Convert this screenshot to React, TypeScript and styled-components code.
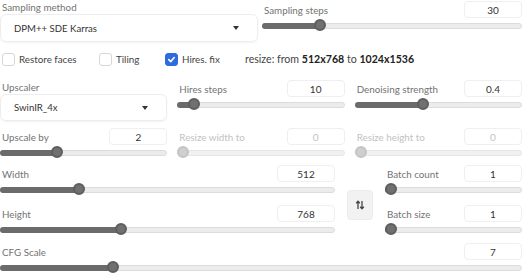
import React from "react";
import styled, { createGlobalStyle } from "styled-components";

const GlobalStyle = createGlobalStyle`
  body {
    margin: 0;
    background: #ffffff;
    font-family: Lato, "Noto Sans", sans-serif;
    font-size: 9.8px;
  }
`;

const Page = styled.div`
  width: 522px;
  display: flex;
  flex-direction: column;
`;

const TopRow = styled.div`
  display: grid;
  grid-template-columns: 258px 1fr;
  gap: 4px;
`;

const Field = styled.div`
  display: flex;
  flex-direction: column;
`;

const Label = styled.div<{ disabled?: boolean }>`
  height: 14px;
  line-height: 14px;
  padding-left: 2px;
  font-size: 9.8px;
  color: ${({ disabled }) => (disabled ? "#c2c2c2" : "#737373")};
  white-space: nowrap;
`;

const SelectBox = styled.div<{ h: number }>`
  height: ${({ h }) => h}px;
  box-sizing: border-box;
  border: 1px solid #ededed;
  border-radius: 6px;
  box-shadow: 0 1px 2px rgba(0, 0, 0, 0.05);
  display: flex;
  align-items: center;
  justify-content: space-between;
  padding: 0 18px 0 13px;
  color: #333;
  font-size: 9.6px;
`;

const Caret = styled.span`
  width: 0;
  height: 0;
  border-left: 3px solid transparent;
  border-right: 3px solid transparent;
  border-top: 4px solid #333;
`;

const SliderWrap = styled.div<{ top?: number }>`
  display: flex;
  flex-direction: column;
  padding-top: ${({ top }) => top || 0}px;
`;

const SliderHead = styled.div`
  height: 17px;
  display: flex;
  align-items: center;
  justify-content: space-between;
`;

const NumBox = styled.div<{ disabled?: boolean }>`
  width: 58px;
  height: 17px;
  box-sizing: border-box;
  border: 1px solid #efefef;
  border-radius: 4px;
  display: flex;
  align-items: center;
  justify-content: center;
  font-size: 10px;
  color: ${({ disabled }) => (disabled ? "#c2c2c2" : "#333")};
`;

const TrackArea = styled.div`
  position: relative;
  height: 14px;
`;

const Track = styled.div<{ disabled?: boolean }>`
  position: absolute;
  left: 0;
  right: 0;
  top: 5px;
  height: 4px;
  border: 1px solid #dcdcdc;
  background: #ececec;
  border-radius: 3px;
  opacity: ${({ disabled }) => (disabled ? 0.7 : 1)};
`;

const Fill = styled.div`
  position: absolute;
  left: 0;
  top: 5px;
  height: 6px;
  background: #6b6b6b;
  border-radius: 3px;
`;

const Thumb = styled.div<{ disabled?: boolean }>`
  position: absolute;
  top: 1px;
  width: 12px;
  height: 12px;
  margin-left: -6px;
  box-sizing: border-box;
  border-radius: 50%;
  background: ${({ disabled }) => (disabled ? "#cfcfcf" : "#707070")};
  border: 2px solid ${({ disabled }) => (disabled ? "#c4c4c4" : "#5e5e5e")};
`;

const CheckRow = styled.div`
  margin-top: 8px;
  height: 18px;
  padding-left: 2px;
  display: flex;
  align-items: center;
`;

const CheckItem = styled.label<{ w: number }>`
  display: flex;
  align-items: center;
  width: ${({ w }) => w}px;
  color: #444;
  font-size: 9.8px;
`;

const Box = styled.span<{ checked?: boolean }>`
  width: 13px;
  height: 13px;
  box-sizing: border-box;
  border-radius: 3px;
  margin-right: 4px;
  display: flex;
  align-items: center;
  justify-content: center;
  border: 1px solid ${({ checked }) => (checked ? "#2f6be0" : "#d6d6d6")};
  background: ${({ checked }) => (checked ? "#2f6be0" : "#fff")};
`;

const ResizeInfo = styled.div`
  margin-left: 2px;
  color: #444;
  font-size: 10.6px;
  b {
    color: #222;
    font-weight: 700;
  }
`;

const ThreeCol = styled.div<{ mt: number }>`
  margin-top: ${({ mt }) => mt}px;
  display: grid;
  grid-template-columns: 1fr 1fr 1fr;
  gap: 10px;
`;

const SizeRow = styled.div`
  margin-top: 6px;
  display: grid;
  grid-template-columns: 335px 26px 1fr;
  column-gap: 12px;
`;

const Stack = styled.div`
  display: flex;
  flex-direction: column;
  gap: 9px;
`;

const SwapButton = styled.div`
  margin-top: 25px;
  width: 26px;
  height: 30px;
  box-sizing: border-box;
  border: 1px solid #ececec;
  background: #f2f2f3;
  border-radius: 4px;
  display: flex;
  align-items: center;
  justify-content: center;
`;

const CfgRow = styled.div`
  margin-top: 7px;
`;

type SliderProps = {
  label: string;
  value: string;
  pct: number;
  disabled?: boolean;
  top?: number;
};

const Slider = ({ label, value, pct, disabled, top }: SliderProps) => (
  <SliderWrap top={top}>
    <SliderHead>
      <Label disabled={disabled}>{label}</Label>
      <NumBox disabled={disabled}>{value}</NumBox>
    </SliderHead>
    <TrackArea>
      <Track disabled={disabled} />
      {!disabled && <Fill style={{ width: `calc(${pct / 100} * (100% - 12px) + 6px)` }} />}
      <Thumb
        disabled={disabled}
        style={{ left: `calc(${pct / 100} * (100% - 12px) + 6px)` }}
      />
    </TrackArea>
  </SliderWrap>
);

const Check = () => (
  <svg width="9" height="9" viewBox="0 0 10 10">
    <path d="M2 5.2 L4.2 7.3 L8 2.8" fill="none" stroke="#fff" strokeWidth="1.8" strokeLinecap="round" strokeLinejoin="round" />
  </svg>
);

const SwapIcon = () => (
  <svg width="10" height="10" viewBox="0 0 10 10">
    <path d="M3 9 V1.5 M1.2 3.3 L3 1.3 L4.8 3.3" fill="none" stroke="#444" strokeWidth="1.3" />
    <path d="M7 1 V8.5 M5.2 6.7 L7 8.7 L8.8 6.7" fill="none" stroke="#444" strokeWidth="1.3" />
  </svg>
);

const App = () => {
  return (
    <Page>
      <GlobalStyle />
      <TopRow>
        <Field>
          <Label>Sampling method</Label>
          <SelectBox h={28}>
            <span>DPM++ SDE Karras</span>
            <Caret />
          </SelectBox>
        </Field>
        <Slider label="Sampling steps" value="30" pct={21} top={1} />
      </TopRow>

      <CheckRow>
        <CheckItem w={97}>
          <Box />
          Restore faces
        </CheckItem>
        <CheckItem w={66}>
          <Box />
          Tiling
        </CheckItem>
        <CheckItem w={78}>
          <Box checked>
            <Check />
          </Box>
          Hires. fix
        </CheckItem>
        <ResizeInfo>
          resize: from <b>512x768</b> to <b>1024x1536</b>
        </ResizeInfo>
      </CheckRow>

      <ThreeCol mt={12}>
        <Field>
          <Label>Upscaler</Label>
          <SelectBox h={27}>
            <span>SwinIR_4x</span>
            <Caret />
          </SelectBox>
        </Field>
        <Slider label="Hires steps" value="10" pct={7} />
        <Slider label="Denoising strength" value="0.4" pct={40} />
      </ThreeCol>

      <ThreeCol mt={7}>
        <Slider label="Upscale by" value="2" pct={33} />
        <Slider label="Resize width to" value="0" pct={0} disabled />
        <Slider label="Resize height to" value="0" pct={0} disabled />
      </ThreeCol>

      <SizeRow>
        <Stack>
          <Slider label="Width" value="512" pct={22.5} />
          <Slider label="Height" value="768" pct={35.5} />
        </Stack>
        <SwapButton>
          <SwapIcon />
        </SwapButton>
        <Stack>
          <Slider label="Batch count" value="1" pct={0} />
          <Slider label="Batch size" value="1" pct={0} />
        </Stack>
      </SizeRow>

      <CfgRow>
        <Slider label="CFG Scale" value="7" pct={21} />
      </CfgRow>
    </Page>
  );
};

export default App;
